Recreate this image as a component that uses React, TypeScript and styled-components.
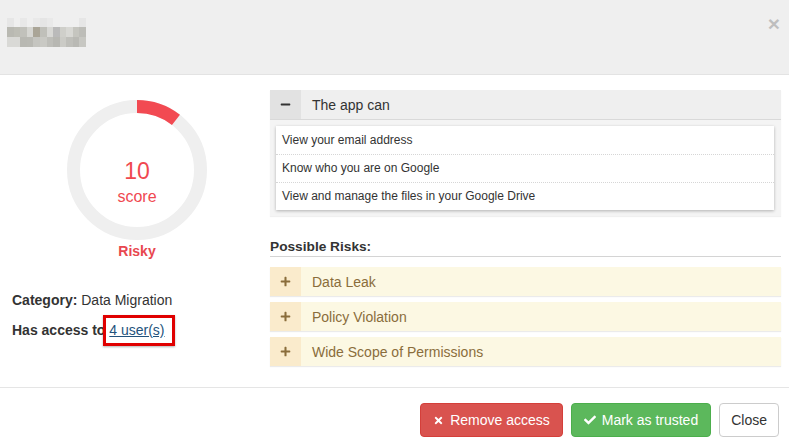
import styled, { createGlobalStyle } from "styled-components";
import { FaTimes, FaCheck, FaMinus, FaPlus } from "react-icons/fa";

const GlobalStyle = createGlobalStyle`
  html, body {
    margin: 0;
    padding: 0;
    background: #fff;
  }
  body {
    font-family: "Liberation Sans", Arial, sans-serif;
    color: #333;
    font-size: 13px;
  }
`;

const Modal = styled.div`
  width: 789px;
  height: 447px;
  display: flex;
  flex-direction: column;
  overflow: hidden;
`;

const Header = styled.div`
  height: 75px;
  box-sizing: border-box;
  background: #efefef;
  border-bottom: 1px solid #e3e3e3;
  display: flex;
  justify-content: space-between;
  align-items: flex-start;
  padding: 18px 9px 0 7px;
`;

const Blurred = styled.div`
  width: 79px;
  height: 29px;
  display: grid;
  grid-template-columns: repeat(12, 1fr);
  grid-template-rows: 9px 10px 10px;
`;

const Pixel = styled.span<{ $c: string }>`
  background: ${(p) => p.$c};
`;

const CloseX = styled.span`
  font-size: 21px;
  font-weight: bold;
  line-height: 12px;
  color: #000;
  opacity: 0.2;
`;

const Body = styled.div`
  flex: 1;
  display: flex;
  gap: 8px;
  padding: 0 8px 0 12px;
`;

const LeftCol = styled.div`
  width: 250px;
  display: flex;
  flex-direction: column;
`;

const Gauge = styled.div`
  display: grid;
  width: 140px;
  height: 140px;
  margin: 25px auto 0;
  & > * {
    grid-area: 1 / 1;
  }
`;

const GaugeText = styled.div`
  display: flex;
  flex-direction: column;
  align-items: center;
  justify-content: center;
  color: #f04850;
  padding-top: 24px;
`;

const Score = styled.div`
  font-size: 23px;
  line-height: 26px;
`;

const ScoreLabel = styled.div`
  font-size: 16px;
  line-height: 20px;
  margin-top: 3px;
`;

const Verdict = styled.div`
  text-align: center;
  font-weight: bold;
  font-size: 14px;
  line-height: 18px;
  margin-top: 2px;
  color: #e8474f;
`;

const MetaLine = styled.div<{ $gap: number }>`
  font-size: 14px;
  line-height: 20px;
  margin-top: ${(p) => p.$gap}px;
  color: #333;
  white-space: nowrap;
`;

const Label = styled.b``;

const Highlight = styled.span`
  position: relative;
  &::after {
    content: "";
    position: absolute;
    left: -6px;
    right: -10px;
    top: -7px;
    bottom: -8px;
    border: 3px solid #e00000;
    box-shadow: 0 1px 2px rgba(0, 0, 0, 0.3);
  }
`;

const UserLink = styled.a`
  color: #23527c;
  text-decoration: underline;
`;

const RightCol = styled.div`
  flex: 1;
  padding-top: 15px;
`;

const Panel = styled.div`
  background: #f4f4f4;
  box-shadow: 0 1px 1px rgba(0, 0, 0, 0.06);
`;

const PanelHead = styled.div<{ $warn?: boolean }>`
  height: 29px;
  display: flex;
  align-items: center;
  background: ${(p) => (p.$warn ? "#fcf8e3" : "#efefef")};
  border-bottom: ${(p) => (p.$warn ? "none" : "1px solid #d9d9d9")};
  color: ${(p) => (p.$warn ? "#8a6d3b" : "#333")};
  font-size: 14px;
`;

const Toggle = styled.span<{ $warn?: boolean }>`
  width: 31px;
  align-self: stretch;
  display: flex;
  align-items: center;
  justify-content: center;
  background: ${(p) => (p.$warn ? "#faebcc" : "#e2e2e2")};
  color: ${(p) => (p.$warn ? "#8a6d3b" : "#333")};
  font-size: 11px;
  margin-right: 11px;
`;

const PanelBody = styled.div`
  padding: 6px 7px 6px 6px;
`;

const List = styled.ul`
  margin: 0;
  padding: 0;
  list-style: none;
  background: #fff;
  box-shadow: 0 1px 3px rgba(0, 0, 0, 0.28);
`;

const Item = styled.li`
  height: 28px;
  line-height: 28px;
  padding-left: 6px;
  font-size: 12px;
  color: #333;
  & + & {
    border-top: 1px dotted #d6d6d6;
    height: 27px;
    line-height: 27px;
  }
`;

const SectionTitle = styled.div`
  margin-top: 22px;
  font-weight: bold;
  font-size: 13.7px;
  line-height: 18px;
  color: #333;
  border-bottom: 1px solid #d4d4d4;
`;

const RiskList = styled.div`
  margin-top: 10px;
  display: flex;
  flex-direction: column;
  gap: 6px;
`;

const RiskRow = styled.div`
  box-shadow: 0 1px 1px rgba(0, 0, 0, 0.08);
`;

const Footer = styled.div`
  border-top: 1px solid #e5e5e5;
  padding: 15px 10px 10px;
  display: flex;
  justify-content: flex-end;
  gap: 8px;
`;

const Button = styled.button<{ $variant: "danger" | "success" | "default" }>`
  height: 34px;
  padding: 0 ${(p) => (p.$variant === "default" ? 11 : 12)}px;
  border-radius: 4px;
  font-family: "Liberation Sans", Arial, sans-serif;
  font-size: 14px;
  display: flex;
  align-items: center;
  gap: 6px;
  cursor: pointer;
  background: ${(p) =>
    p.$variant === "danger" ? "#d9534f" : p.$variant === "success" ? "#5cb85c" : "#fff"};
  border: 1px solid
    ${(p) =>
      p.$variant === "danger" ? "#d43f3a" : p.$variant === "success" ? "#4cae4c" : "#ccc"};
  color: ${(p) => (p.$variant === "default" ? "#333" : "#fff")};
  svg {
    font-size: ${(p) => (p.$variant === "success" ? 12 : 11)}px;
  }
`;

const pixels = [
  ["#e6e6e6", "#efefef", "#e8e8e8", "#efefef", "#e9e9e9", "#e5e5e5", "#e9e9e9", "#efefef", "#efefef", "#efefef", "#efefef", "#e6e6e6"],
  ["#b9b9b2", "#bdbdb5", "#c1c1bb", "#d6d6d2", "#aaa597", "#c0c0ba", "#d8d8d5", "#bababa", "#cfcfca", "#d8d8d4", "#c5c5bf", "#bdbdb8"],
  ["#d9d9d6", "#d9d9d6", "#b8b8b2", "#b9b9b3", "#c5c5c0", "#c9c9c4", "#bebeb9", "#b7b7b2", "#cbcbc6", "#bfbfba", "#b9b9b4", "#c7c7c2"],
];

const permissions = [
  "View your email address",
  "Know who you are on Google",
  "View and manage the files in your Google Drive",
];

const risks = ["Data Leak", "Policy Violation", "Wide Scope of Permissions"];

function ScoreRing({ score }: { score: number }) {
  const r = 63.5;
  const c = 2 * Math.PI * r;
  const len = (score / 100) * c;
  return (
    <svg width="140" height="140" viewBox="0 0 140 140">
      <circle cx="70" cy="70" r={r} fill="none" stroke="#efefef" strokeWidth="13" />
      <circle
        cx="70"
        cy="70"
        r={r}
        fill="none"
        stroke="#f24a52"
        strokeWidth="13"
        strokeDasharray={`${len} ${c}`}
        transform="rotate(-90 70 70)"
      />
    </svg>
  );
}

export default function App() {
  return (
    <>
      <GlobalStyle />
      <Modal>
        <Header>
          <Blurred>
            {pixels.flat().map((c, i) => (
              <Pixel key={i} $c={c} />
            ))}
          </Blurred>
          <CloseX>×</CloseX>
        </Header>
        <Body>
          <LeftCol>
            <Gauge>
              <ScoreRing score={10.5} />
              <GaugeText>
                <Score>10</Score>
                <ScoreLabel>score</ScoreLabel>
              </GaugeText>
            </Gauge>
            <Verdict>Risky</Verdict>
            <MetaLine $gap={30}>
              <Label>Category:</Label> Data Migration
            </MetaLine>
            <MetaLine $gap={10}>
              <Label>Has access to</Label>{" "}
              <Highlight>
                <UserLink href="#">4 user(s)</UserLink>
              </Highlight>
            </MetaLine>
          </LeftCol>
          <RightCol>
            <Panel>
              <PanelHead>
                <Toggle>
                  <FaMinus />
                </Toggle>
                The app can
              </PanelHead>
              <PanelBody>
                <List>
                  {permissions.map((p) => (
                    <Item key={p}>{p}</Item>
                  ))}
                </List>
              </PanelBody>
            </Panel>
            <SectionTitle>Possible Risks:</SectionTitle>
            <RiskList>
              {risks.map((r) => (
                <RiskRow key={r}>
                  <PanelHead $warn>
                    <Toggle $warn>
                      <FaPlus />
                    </Toggle>
                    {r}
                  </PanelHead>
                </RiskRow>
              ))}
            </RiskList>
          </RightCol>
        </Body>
        <Footer>
          <Button $variant="danger">
            <FaTimes />
            Remove access
          </Button>
          <Button $variant="success">
            <FaCheck />
            Mark as trusted
          </Button>
          <Button $variant="default">Close</Button>
        </Footer>
      </Modal>
    </>
  );
}
